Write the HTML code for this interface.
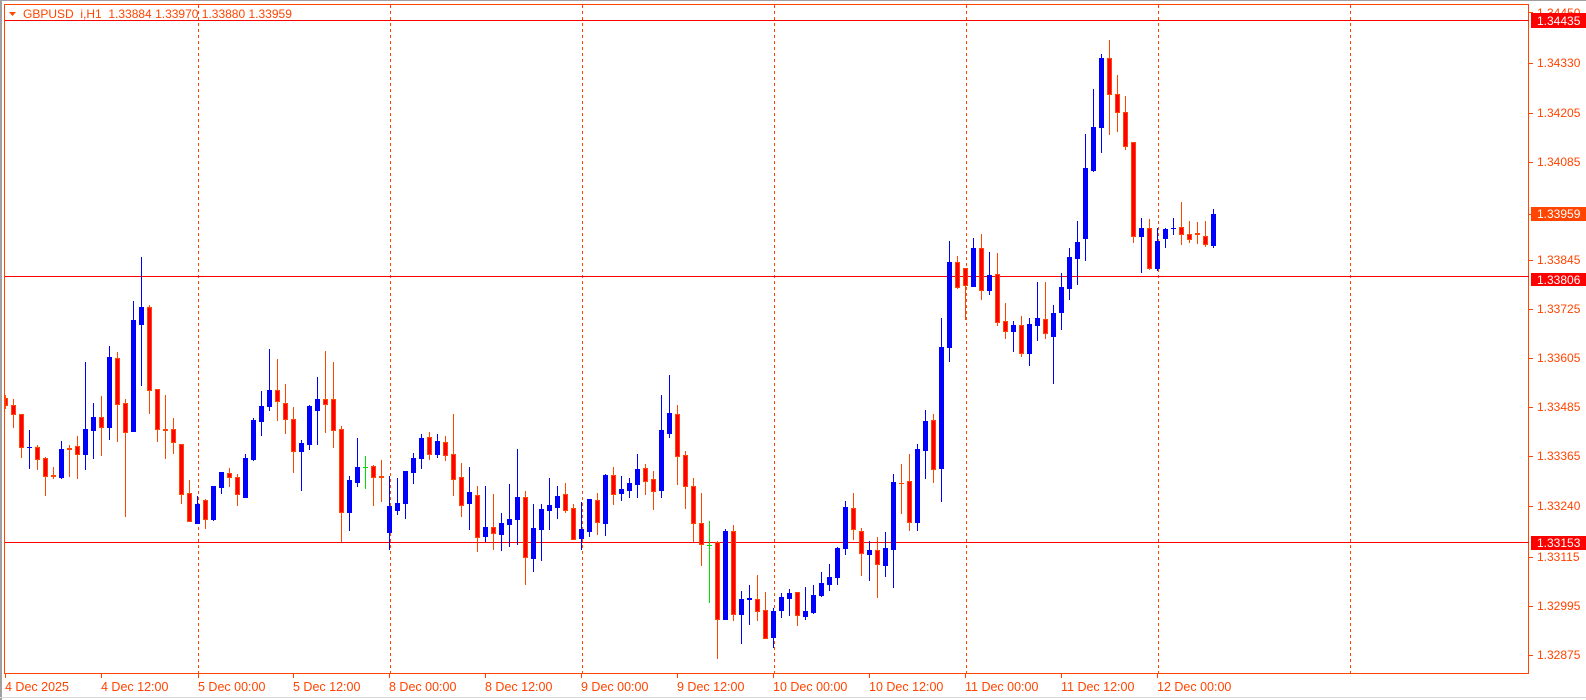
<!DOCTYPE html>
<html><head><meta charset="utf-8">
<style>
html,body{margin:0;padding:0;background:#fff;width:1586px;height:700px;overflow:hidden}
svg{display:block}
text{font-family:"Liberation Sans",sans-serif}
</style></head>
<body>
<svg id="c" width="1586" height="700" xmlns="http://www.w3.org/2000/svg" shape-rendering="crispEdges">
<rect x="0" y="0" width="1586" height="700" fill="#fff"/>
<rect x="0" y="0" width="1586" height="1" fill="#a0a0a0"/>
<rect x="0" y="0" width="2" height="700" fill="#a0a0a0"/>
<rect x="0" y="697" width="1586" height="1" fill="#d8d8d8"/>
<g id="grid" stroke="#ff4500" stroke-width="1" stroke-dasharray="3,3"></g>
<rect x="4.5" y="4.5" width="1524" height="669" fill="none" stroke="#ff4500" stroke-width="1"/>
<g id="hl" fill="#ff0000">
<rect x="5" y="20" width="1524" height="1"/>
<rect x="5" y="276" width="1524" height="1"/>
<rect x="5" y="542" width="1524" height="1"/>
</g>
<g id="cd"></g>
<g id="ax" fill="#ff4500"></g>
<g font-size="12" fill="#ff4500">
<text x="1537" y="17">1.34450</text>
<text x="1537" y="67">1.34330</text>
<text x="1537" y="117">1.34205</text>
<text x="1537" y="166">1.34085</text>
<text x="1537" y="264">1.33845</text>
<text x="1537" y="313">1.33725</text>
<text x="1537" y="362">1.33605</text>
<text x="1537" y="411">1.33485</text>
<text x="1537" y="460">1.33365</text>
<text x="1537" y="510">1.33240</text>
<text x="1537" y="561">1.33115</text>
<text x="1537" y="610">1.32995</text>
<text x="1537" y="659">1.32875</text>
</g>
<rect x="1531" y="13" width="55" height="15" fill="#ff0000"/>
<text x="1537" y="25" font-size="12" fill="#fff">1.34435</text>
<rect x="1531" y="207" width="55" height="14" fill="#ff4500"/>
<text x="1537" y="218" font-size="12" fill="#fff">1.33959</text>
<rect x="1531" y="273" width="55" height="13" fill="#ff0000"/>
<text x="1537" y="284" font-size="12" fill="#fff">1.33806</text>
<rect x="1531" y="536" width="55" height="14" fill="#ff0000"/>
<text x="1537" y="547" font-size="12" fill="#fff">1.33153</text>
<g font-size="12.5" fill="#ff4500" id="tl">
<text x="5" y="691">4 Dec 2025</text>
<text x="101" y="691">4 Dec 12:00</text>
<text x="198" y="691">5 Dec 00:00</text>
<text x="293" y="691">5 Dec 12:00</text>
<text x="389" y="691">8 Dec 00:00</text>
<text x="485" y="691">8 Dec 12:00</text>
<text x="581" y="691">9 Dec 00:00</text>
<text x="677" y="691">9 Dec 12:00</text>
<text x="773" y="691">10 Dec 00:00</text>
<text x="869" y="691">10 Dec 12:00</text>
<text x="965" y="691">11 Dec 00:00</text>
<text x="1061" y="691">11 Dec 12:00</text>
<text x="1157" y="691">12 Dec 00:00</text>
</g>
<polygon points="9,12 16,12 12.5,16" fill="#ff4500" shape-rendering="auto"/>
<text x="23" y="18" font-size="12" fill="#ff4500" xml:space="preserve">GBPUSD  i,H1  1.33884 1.33970 1.33880 1.33959</text>
</svg>
<script>
var D="r 398 405 395 408|r 405 414 399 427|r 414 447 414 457|b 447 447 430 468|r 447 459 445 469|r 458 476 457 495|r 475 477 467 478|b 449 477 441 478|r 448 450 445 476|r 446 454 436 478|b 429 454 362 469|b 417 430 403 458|r 417 427 396 455|b 357 427 346 439|r 358 404 352 441|r 403 432 399 516|b 320 431 301 431|b 307 324 257 385|r 307 390 305 413|r 389 429 389 441|r 429 431 395 458|r 429 442 418 453|r 444 494 444 503|r 493 521 480 521|b 504 523 496 523|r 500 519 499 528|b 486 519 486 520|b 472 487 472 493|r 473 477 468 486|r 477 494 474 505|b 458 497 454 497|b 420 459 418 460|b 406 421 391 435|b 390 406 349 410|r 390 401 359 420|r 403 419 384 433|r 419 451 407 472|b 443 451 440 490|b 406 444 405 449|b 399 410 377 444|r 399 404 351 432|r 399 430 362 447|r 429 512 426 541|b 480 512 476 530|b 467 482 438 486|g 467 467 456 488|r 466 477 465 505|r 476 478 460 501|b 506 532 476 549|b 503 510 478 514|b 471 503 471 518|b 458 472 453 483|b 438 458 434 468|r 437 454 432 459|b 441 454 434 457|r 442 455 436 460|r 454 479 414 495|r 477 505 463 516|b 492 503 467 529|r 495 537 486 551|b 527 536 486 541|r 527 533 494 549|b 523 534 513 550|b 519 524 484 546|b 497 519 449 544|r 497 557 491 584|b 528 558 504 571|b 509 529 504 560|b 505 510 478 529|b 496 507 486 518|r 494 510 483 512|r 508 539 504 539|b 529 538 502 549|b 499 531 499 536|r 500 522 493 534|b 475 523 474 535|r 475 494 467 504|b 489 493 476 500|b 483 490 478 497|b 469 484 454 497|r 468 481 464 494|r 479 491 471 509|b 430 490 395 497|b 413 433 375 437|r 414 456 405 484|r 455 486 451 508|r 486 523 478 541|r 523 544 493 565|g 545 545 521 602|r 542 619 541 658|b 531 619 529 619|r 531 614 525 620|b 599 614 591 643|b 598 600 585 624|r 599 611 575 620|r 610 638 592 638|b 611 637 608 647|b 597 610 593 617|b 593 598 589 615|r 592 615 592 625|b 611 616 587 619|b 595 612 585 613|b 583 595 572 596|b 577 584 564 590|b 548 577 547 584|b 507 548 501 554|r 508 529 493 539|r 531 553 528 575|b 550 554 541 580|r 550 564 537 597|b 548 565 532 576|b 482 549 474 587|r 483 484 464 513|r 481 522 454 530|b 449 522 444 530|b 421 450 410 478|r 420 469 414 482|b 347 468 318 501|b 262 347 241 361|r 262 287 256 288|r 268 285 268 319|b 248 286 238 286|r 248 290 234 299|b 275 290 252 294|r 274 322 253 325|r 321 331 303 338|b 325 331 321 351|r 325 353 316 356|b 324 353 318 365|b 318 325 282 340|r 319 333 282 338|b 313 336 305 383|b 287 312 273 329|b 257 288 248 299|b 242 258 221 284|b 168 238 134 260|b 127 170 89 171|b 58 127 54 152|r 58 94 40 134|r 94 112 75 131|r 112 146 96 149|r 142 236 142 242|b 228 236 218 272|r 228 268 219 269|b 241 268 228 270|b 229 238 228 247|b 228 229 218 234|r 227 234 202 244|r 234 239 221 242|r 233 235 222 243|r 236 244 221 246|b 214 245 209 247";
var NS="http://www.w3.org/2000/svg";
function R(g,x,y,w,h,f){var r=document.createElementNS(NS,"rect");r.setAttribute("x",x);r.setAttribute("y",y);r.setAttribute("width",w);r.setAttribute("height",Math.max(h,1));r.setAttribute("fill",f);g.appendChild(r);}
var cd=document.getElementById("cd");
D.split("|").forEach(function(s,i){
 var p=s.split(" "),t=p[0],o=+p[1],c=+p[2],h=+p[3],l=+p[4],x=5+8*i;
 if(o>c){var q=o;o=c;c=q;}
 var col=t=="b"?"#0000ff":(t=="g"?"#00dd00":"#ff4500");
 var x0=x-2,w=5;
 if(x0<5){w-= (5-x0);x0=5;}
 R(cd,x,h,1,l-h+1,col);
 if(c-o<=2){R(cd,x0,o,w,Math.max(c-o,1),col);}
 else if(t=="b"){R(cd,x0,o,w,c-o+1,col);}
 else {R(cd,x0,o,w,c-o+1,"#ff4500");R(cd,x0+1,o+1,w-2,c-o-1,"#ff0000");}
});
var g=document.getElementById("grid");
[198,390,582,774,966,1158,1350].forEach(function(x){var l=document.createElementNS(NS,"line");l.setAttribute("x1",x+0.5);l.setAttribute("x2",x+0.5);l.setAttribute("y1",5);l.setAttribute("y2",673);g.appendChild(l);});
var ax=document.getElementById("ax");
[5,101,198,293,389,485,581,677,773,869,965,1061,1157].forEach(function(x){R(ax,x,674,1,4,"#ff4500");});
[12,63,113,162,214,260,309,358,407,456,506,557,606,655].forEach(function(y){R(ax,1529,y,4,1,"#ff4500");});
</script>
</body></html>
